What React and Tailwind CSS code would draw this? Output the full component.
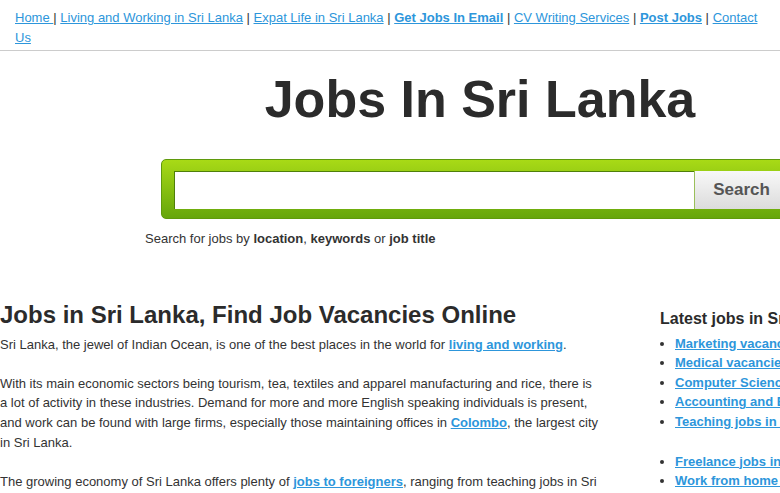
import React from 'react';

const link = "text-[#2d96db] underline";

const NavBar = () => (
  <div className="px-[15px] pt-[8px] pb-[2px] border-b border-[#cccccc] text-[13px] leading-[20px] text-[#333]">
    <a className={link}>Home </a> | <a className={link}>Living and Working in Sri Lanka</a> |{' '}
    <a className={link}>Expat Life in Sri Lanka</a> | <a className={`${link} font-bold`}>Get Jobs In Email</a> |{' '}
    <a className={link}>CV Writing Services</a> | <a className={`${link} font-bold`}>Post Jobs</a> |{' '}
    <a className={link}>Contact Us</a>
  </div>
);

const SearchBox = () => (
  <div className="mx-auto mt-[30px] w-[638px] h-[60px] rounded-[5px] bg-gradient-to-b from-[#a8da16] to-[#66a60c] border border-[#5f9a0c] pt-[11px] pl-[12px] pr-[10px]">
    <div className="flex h-[38px]">
      <input className="flex-1 bg-white border-t border-l border-[#4f7f0a] outline-none" />
      <button className="w-[94px] bg-gradient-to-b from-[#f8f8f8] to-[#dcdcdc] border-l border-[#9abf5a] text-[17px] font-bold text-[#555]">
        Search
      </button>
    </div>
  </div>
);

const sidebarTop = [
  "Marketing vacancies in Sri Lanka",
  "Medical vacancies in Sri Lanka",
  "Computer Science jobs in Sri Lanka",
  "Accounting and Banking jobs",
  "Teaching jobs in Sri Lanka",
];
const sidebarBottom = ["Freelance jobs in Sri Lanka", "Work from home jobs"];

export default function App() {
  return (
    <div className="w-full overflow-hidden bg-white font-['Liberation_Sans',Arial,sans-serif] text-[#333]">
      <NavBar />
      <div className="w-[960px]">
        <h1 className="mt-[18px] text-center text-[52px] leading-[60px] font-bold text-[#2b2b2b]">Jobs In Sri Lanka</h1>
        <SearchBox />
        <p className="mt-[10px] pl-[145px] text-[13px] leading-[19.6px]">
          Search for jobs by <b>location</b>, <b>keywords</b> or <b>job title</b>
        </p>

        <div className="flex mt-[51px]">
          <div className="w-[600px]">
            <h2 className="text-[24px] leading-[29px] font-bold text-[#2b2b2b]">Jobs in Sri Lanka, Find Job Vacancies Online</h2>
            <div className="mt-[6px] text-[13px] leading-[19.6px]">
              <p>
                Sri Lanka, the jewel of Indian Ocean, is one of the best places in the world for{' '}
                <a className={`${link} font-bold`}>living and working</a>.
              </p>
              <p className="mt-[19.6px]">
                With its main economic sectors being tourism, tea, textiles and apparel manufacturing and rice, there is a lot
                of activity in these industries. Demand for more and more English speaking individuals is present, and work can
                be found with large firms, especially those maintaining offices in <a className={`${link} font-bold`}>Colombo</a>,
                the largest city in Sri Lanka.
              </p>
              <p className="mt-[19.6px]">
                The growing economy of Sri Lanka offers plenty of <a className={`${link} font-bold`}>jobs to foreigners</a>,
                ranging from teaching jobs in Sri Lanka to positions in tourism and hospitality.
              </p>
            </div>
          </div>
          <div className="ml-[60px] w-[300px] pt-[8px]">
            <h3 className="text-[16px] leading-[22px] font-bold text-[#2b2b2b] whitespace-nowrap">Latest jobs in Sri Lanka</h3>
            <ul className="mt-[4px] list-disc pl-[15px] text-[13px] leading-[19.6px] whitespace-nowrap">
              {sidebarTop.map((t) => (
                <li key={t}><a className={`${link} font-bold`}>{t}</a></li>
              ))}
            </ul>
            <ul className="mt-[20px] list-disc pl-[15px] text-[13px] leading-[19.6px] whitespace-nowrap">
              {sidebarBottom.map((t) => (
                <li key={t}><a className={`${link} font-bold`}>{t}</a></li>
              ))}
            </ul>
          </div>
        </div>
      </div>
    </div>
  );
}
